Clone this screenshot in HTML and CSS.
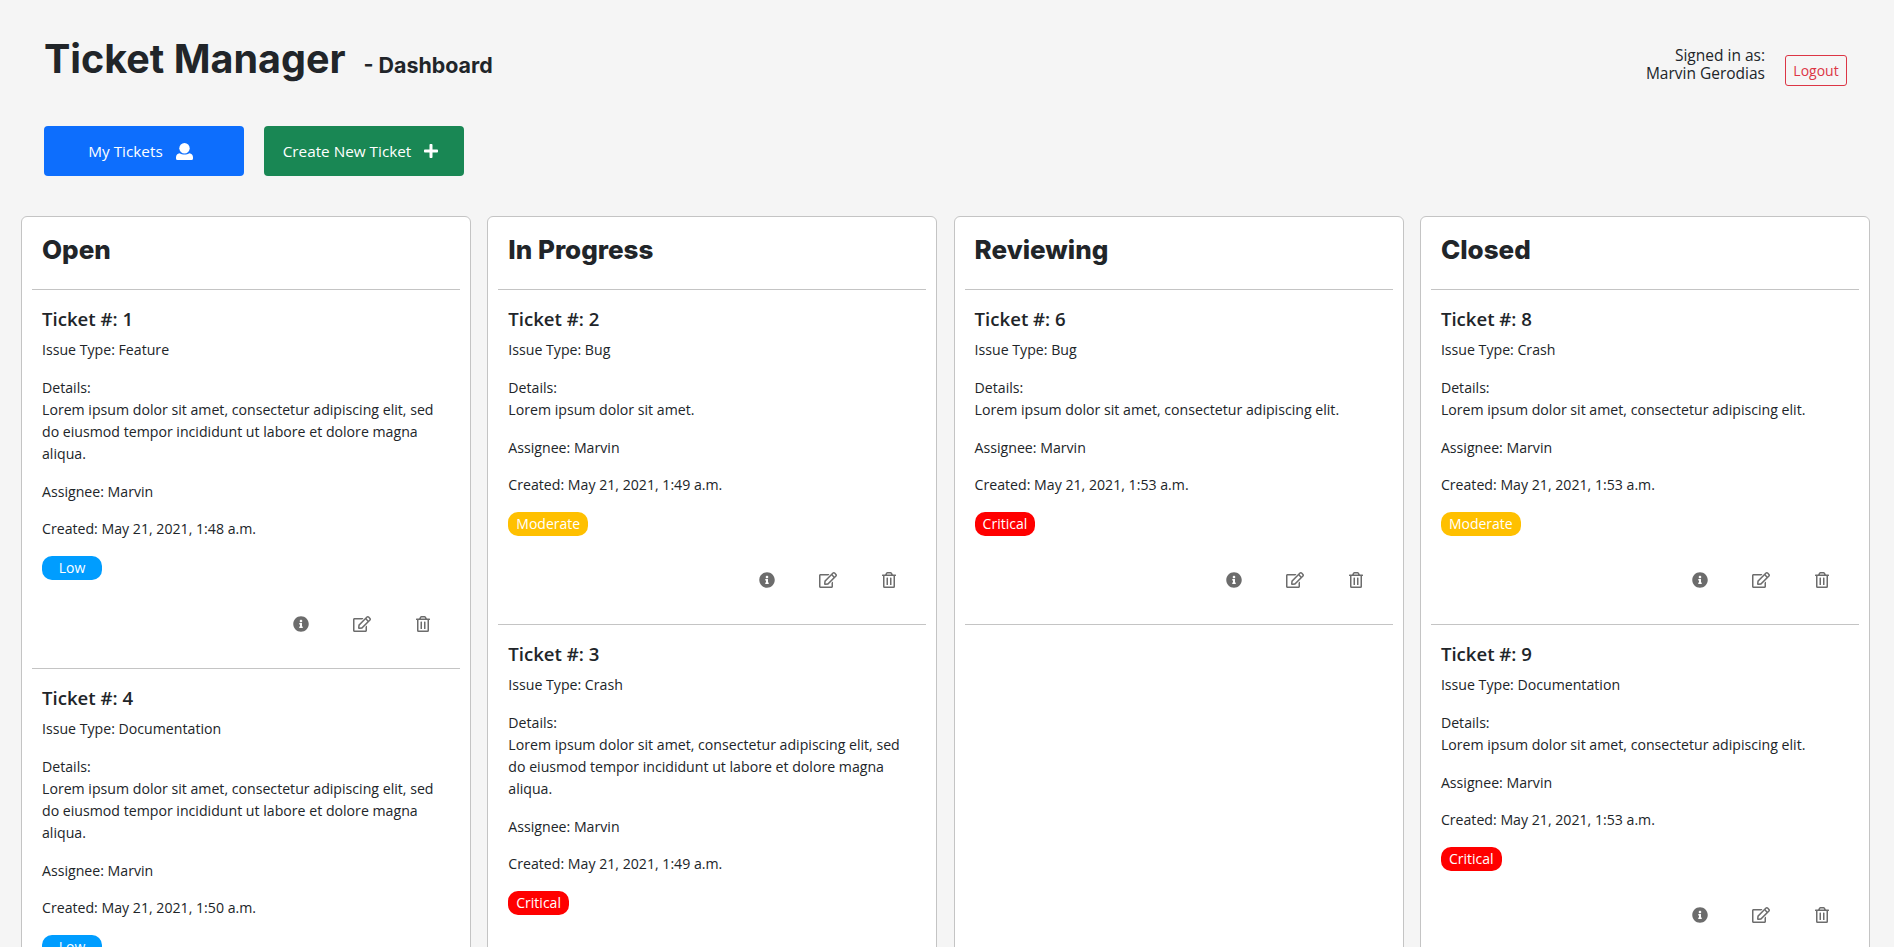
FILE: index.html
```html
<!DOCTYPE html>
<html lang="en">
<head>
    <meta charset="UTF-8">
    <title>Ticket Manager</title>
    <link rel="stylesheet" href="styles.css">
</head>
<body>
    <svg class="icon-defs" xmlns="http://www.w3.org/2000/svg">
        <symbol id="i-user" viewBox="0 0 17 17"><circle cx="8.5" cy="5.2" r="5.2"/><path d="M3.5 10.2c1.4.8 3.2 1.3 5 1.3s3.6-.5 5-1.3c2 .2 3.5 2 3.5 4v1.3a1.5 1.5 0 0 1-1.5 1.5h-14A1.5 1.5 0 0 1 0 15.5v-1.3c0-2 1.5-3.8 3.5-4z"/></symbol>
        <symbol id="i-plus" viewBox="0 0 448 512"><path d="M416 208H272V64c0-17.67-14.33-32-32-32h-32c-17.67 0-32 14.33-32 32v144H32c-17.67 0-32 14.33-32 32v32c0 17.67 14.33 32 32 32h144v144c0 17.67 14.33 32 32 32h32c17.67 0 32-14.33 32-32V304h144c17.67 0 32-14.33 32-32v-32c0-17.67-14.33-32-32-32z"/></symbol>
        <symbol id="i-info" viewBox="0 0 512 512"><path d="M256 8C119.043 8 8 119.083 8 256c0 136.997 111.043 248 248 248s248-111.003 248-248C504 119.083 392.957 8 256 8zm0 110c23.196 0 42 18.804 42 42s-18.804 42-42 42-42-18.804-42-42 18.804-42 42-42zm56 254c0 6.627-5.373 12-12 12h-88c-6.627 0-12-5.373-12-12v-24c0-6.627 5.373-12 12-12h12v-64h-12c-6.627 0-12-5.373-12-12v-24c0-6.627 5.373-12 12-12h64c6.627 0 12 5.373 12 12v100h12c6.627 0 12 5.373 12 12v24z"/></symbol>
        <symbol id="i-edit" viewBox="0 0 576 512"><path d="M402.3 344.9l32-32c5-5 13.7-1.5 13.7 5.7V464c0 26.5-21.5 48-48 48H48c-26.5 0-48-21.5-48-48V112c0-26.5 21.5-48 48-48h273.5c7.1 0 10.7 8.6 5.7 13.7l-32 32c-1.5 1.5-3.5 2.3-5.7 2.3H48v352h352V350.5c0-2.1.8-4.1 2.3-5.6zm156.6-201.8L296.3 405.7l-90.4 10c-26.2 2.9-48.5-19.2-45.6-45.6l10-90.4L432.9 17.1c22.9-22.9 59.9-22.9 82.7 0l43.2 43.2c22.9 22.9 22.9 60 .1 82.8zM460.1 174L402 115.9 216.2 301.8l-7.3 65.3 65.3-7.3L460.1 174zm64.8-79.7l-43.2-43.2c-4.1-4.1-10.8-4.1-14.8 0L436 82l58.1 58.1 30.9-30.9c4-4.2 4-10.8-.1-14.9z"/></symbol>
        <symbol id="i-trash" viewBox="0 0 448 512"><path d="M268 416h24a12 12 0 0 0 12-12V188a12 12 0 0 0-12-12h-24a12 12 0 0 0-12 12v216a12 12 0 0 0 12 12zM432 80h-82.41l-34-56.7A48 48 0 0 0 274.41 0H173.59a48 48 0 0 0-41.16 23.3L98.41 80H16A16 16 0 0 0 0 96v16a16 16 0 0 0 16 16h16v336a48 48 0 0 0 48 48h288a48 48 0 0 0 48-48V128h16a16 16 0 0 0 16-16V96a16 16 0 0 0-16-16zM171.84 50.91A6 6 0 0 1 177 48h94a6 6 0 0 1 5.15 2.91L293.61 80H154.39zM368 464H80V128h288zm-212-48h24a12 12 0 0 0 12-12V188a12 12 0 0 0-12-12h-24a12 12 0 0 0-12 12v216a12 12 0 0 0 12 12z"/></symbol>
    </svg>

    <header class="top">
        <div class="brand">
            <h1>Ticket Manager</h1>
            <span class="subtitle">- Dashboard</span>
        </div>
        <div class="account">
            <p>Signed in as:<br>Marvin Gerodias</p>
            <a class="logout" href="#">Logout</a>
        </div>
    </header>

    <nav class="nav-buttons">
        <a class="btn btn-blue" href="#">My Tickets <svg class="btn-icon"><use href="#i-user"/></svg></a>
        <a class="btn btn-green" href="#">Create New Ticket <svg class="btn-icon"><use href="#i-plus"/></svg></a>
    </nav>

    <main class="board">
        <section class="column">
            <h2>Open</h2>
            <article class="ticket">
                <h3>Ticket #: 1</h3>
                <p>Issue Type: Feature</p>
                <p>Details:<br>Lorem ipsum dolor sit amet, consectetur adipiscing elit, sed do eiusmod tempor incididunt ut labore et dolore magna aliqua.</p>
                <p>Assignee: Marvin</p>
                <p>Created: May 21, 2021, 1:48 a.m.</p>
                <span class="badge low">Low</span>
                <div class="actions">
                    <a href="#"><svg class="icon-info"><use href="#i-info"/></svg></a>
                    <a href="#"><svg class="icon-edit"><use href="#i-edit"/></svg></a>
                    <a href="#"><svg class="icon-trash"><use href="#i-trash"/></svg></a>
                </div>
            </article>
            <article class="ticket">
                <h3>Ticket #: 4</h3>
                <p>Issue Type: Documentation</p>
                <p>Details:<br>Lorem ipsum dolor sit amet, consectetur adipiscing elit, sed do eiusmod tempor incididunt ut labore et dolore magna aliqua.</p>
                <p>Assignee: Marvin</p>
                <p>Created: May 21, 2021, 1:50 a.m.</p>
                <span class="badge low">Low</span>
                <div class="actions">
                    <a href="#"><svg class="icon-info"><use href="#i-info"/></svg></a>
                    <a href="#"><svg class="icon-edit"><use href="#i-edit"/></svg></a>
                    <a href="#"><svg class="icon-trash"><use href="#i-trash"/></svg></a>
                </div>
            </article>
        </section>

        <section class="column">
            <h2>In Progress</h2>
            <article class="ticket">
                <h3>Ticket #: 2</h3>
                <p>Issue Type: Bug</p>
                <p>Details:<br>Lorem ipsum dolor sit amet.</p>
                <p>Assignee: Marvin</p>
                <p>Created: May 21, 2021, 1:49 a.m.</p>
                <span class="badge moderate">Moderate</span>
                <div class="actions">
                    <a href="#"><svg class="icon-info"><use href="#i-info"/></svg></a>
                    <a href="#"><svg class="icon-edit"><use href="#i-edit"/></svg></a>
                    <a href="#"><svg class="icon-trash"><use href="#i-trash"/></svg></a>
                </div>
            </article>
            <article class="ticket">
                <h3>Ticket #: 3</h3>
                <p>Issue Type: Crash</p>
                <p>Details:<br>Lorem ipsum dolor sit amet, consectetur adipiscing elit, sed do eiusmod tempor incididunt ut labore et dolore magna aliqua.</p>
                <p>Assignee: Marvin</p>
                <p>Created: May 21, 2021, 1:49 a.m.</p>
                <span class="badge critical">Critical</span>
                <div class="actions">
                    <a href="#"><svg class="icon-info"><use href="#i-info"/></svg></a>
                    <a href="#"><svg class="icon-edit"><use href="#i-edit"/></svg></a>
                    <a href="#"><svg class="icon-trash"><use href="#i-trash"/></svg></a>
                </div>
            </article>
        </section>

        <section class="column">
            <h2>Reviewing</h2>
            <article class="ticket">
                <h3>Ticket #: 6</h3>
                <p>Issue Type: Bug</p>
                <p>Details:<br>Lorem ipsum dolor sit amet, consectetur adipiscing elit.</p>
                <p>Assignee: Marvin</p>
                <p>Created: May 21, 2021, 1:53 a.m.</p>
                <span class="badge critical">Critical</span>
                <div class="actions">
                    <a href="#"><svg class="icon-info"><use href="#i-info"/></svg></a>
                    <a href="#"><svg class="icon-edit"><use href="#i-edit"/></svg></a>
                    <a href="#"><svg class="icon-trash"><use href="#i-trash"/></svg></a>
                </div>
            </article>
        </section>

        <section class="column">
            <h2>Closed</h2>
            <article class="ticket">
                <h3>Ticket #: 8</h3>
                <p>Issue Type: Crash</p>
                <p>Details:<br>Lorem ipsum dolor sit amet, consectetur adipiscing elit.</p>
                <p>Assignee: Marvin</p>
                <p>Created: May 21, 2021, 1:53 a.m.</p>
                <span class="badge moderate">Moderate</span>
                <div class="actions">
                    <a href="#"><svg class="icon-info"><use href="#i-info"/></svg></a>
                    <a href="#"><svg class="icon-edit"><use href="#i-edit"/></svg></a>
                    <a href="#"><svg class="icon-trash"><use href="#i-trash"/></svg></a>
                </div>
            </article>
            <article class="ticket">
                <h3>Ticket #: 9</h3>
                <p>Issue Type: Documentation</p>
                <p>Details:<br>Lorem ipsum dolor sit amet, consectetur adipiscing elit.</p>
                <p>Assignee: Marvin</p>
                <p>Created: May 21, 2021, 1:53 a.m.</p>
                <span class="badge critical">Critical</span>
                <div class="actions">
                    <a href="#"><svg class="icon-info"><use href="#i-info"/></svg></a>
                    <a href="#"><svg class="icon-edit"><use href="#i-edit"/></svg></a>
                    <a href="#"><svg class="icon-trash"><use href="#i-trash"/></svg></a>
                </div>
            </article>
        </section>
    </main>
</body>
</html>
```
FILE: styles.css
```css
html, body {
    height: 100%;
    overflow: hidden;
}
body {
    margin: 0;
    background-color: #f5f5f5;
    color: #212529;
    font-family: 'Open Sans', sans-serif;
    font-size: 14.15px;
    line-height: 22px;
}
a {
    text-decoration: none;
}
.icon-defs {
    display: none;
}

/* header */
.top {
    display: flex;
    justify-content: space-between;
    align-items: flex-start;
    height: 126px;
    padding: 0 44px;
    box-sizing: border-box;
}
.brand {
    display: flex;
    align-items: baseline;
    padding-top: 33px;
}
h1 {
    margin: 0;
    font-family: 'Inter', sans-serif;
    font-size: 39.5px;
    line-height: 52px;
    font-weight: 700;
}
.subtitle {
    margin-left: 18px;
    font-family: 'Inter', sans-serif;
    font-size: 21.4px;
    font-weight: 700;
}
.account {
    display: flex;
    align-items: flex-start;
    margin: 46px 3px 0 0;
}
.account p {
    margin: 0 20px 0 0;
    text-align: right;
    font-size: 15.5px;
    line-height: 18px;
    font-weight: 500;
}
.logout {
    display: block;
    width: 62px;
    height: 31px;
    margin-top: 9px;
    box-sizing: border-box;
    border: 1px solid #dc3545;
    border-radius: 3px;
    color: #dc3545;
    font-size: 14px;
    line-height: 29px;
    text-align: center;
}

/* buttons */
.nav-buttons {
    display: flex;
    gap: 20px;
    padding: 0 44px;
}
.btn {
    display: flex;
    justify-content: center;
    align-items: center;
    gap: 13px;
    width: 200px;
    height: 50px;
    box-sizing: border-box;
    padding-right: 7px;
    border-radius: 4px;
    color: white;
    font-size: 15.3px;
}
.btn-blue {
    background-color: #0d6efd;
}
.btn-green {
    background-color: #198754;
}
.btn-icon {
    width: 17px;
    height: 17px;
    fill: white;
}
.btn-green .btn-icon {
    width: 14px;
    height: 16px;
}

/* board */
.board {
    display: grid;
    grid-template-columns: repeat(4, 450px);
    gap: 16.3px;
    align-items: start;
    margin-top: 40px;
    padding-left: 21px;
}
.column {
    min-height: 1000px;
    box-sizing: border-box;
    padding: 0 10px;
    background: white;
    border: 1px solid #c4c4c4;
    border-radius: 6px;
}
h2 {
    margin: 0;
    height: 73px;
    padding: 17px 10px 0;
    box-sizing: border-box;
    font-family: 'Inter', sans-serif;
    font-size: 26px;
    line-height: 32px;
    font-weight: 800;
    border-bottom: 1px solid #c4c4c4;
}
.ticket {
    padding: 16px 10px 0;
    border-bottom: 1px solid #c4c4c4;
}
h3 {
    margin: 0 0 7px;
    font-size: 18.6px;
    line-height: 26px;
    font-weight: 600;
}
.ticket p {
    margin: 0 0 15.75px;
}
.badge {
    display: block;
    width: fit-content;
    min-width: 36px;
    padding: 0 8px;
    height: 24px;
    border-radius: 10px;
    color: white;
    font-size: 14px;
    line-height: 24px;
    text-align: center;
}
.low {
    background-color: #009dff;
    min-width: 44px;
}
.moderate {
    background-color: #ffc000;
}
.critical {
    background-color: #ff0000;
}
.actions {
    display: flex;
    justify-content: flex-end;
    align-items: center;
    height: 88px;
    margin-right: -3.5px;
}
.actions a {
    display: flex;
    justify-content: center;
    width: 61px;
    fill: #6c6c6c;
}
.icon-info {
    width: 16px;
    height: 16px;
}
.icon-edit {
    width: 18px;
    height: 16px;
}
.icon-trash {
    width: 14px;
    height: 16px;
}
```
